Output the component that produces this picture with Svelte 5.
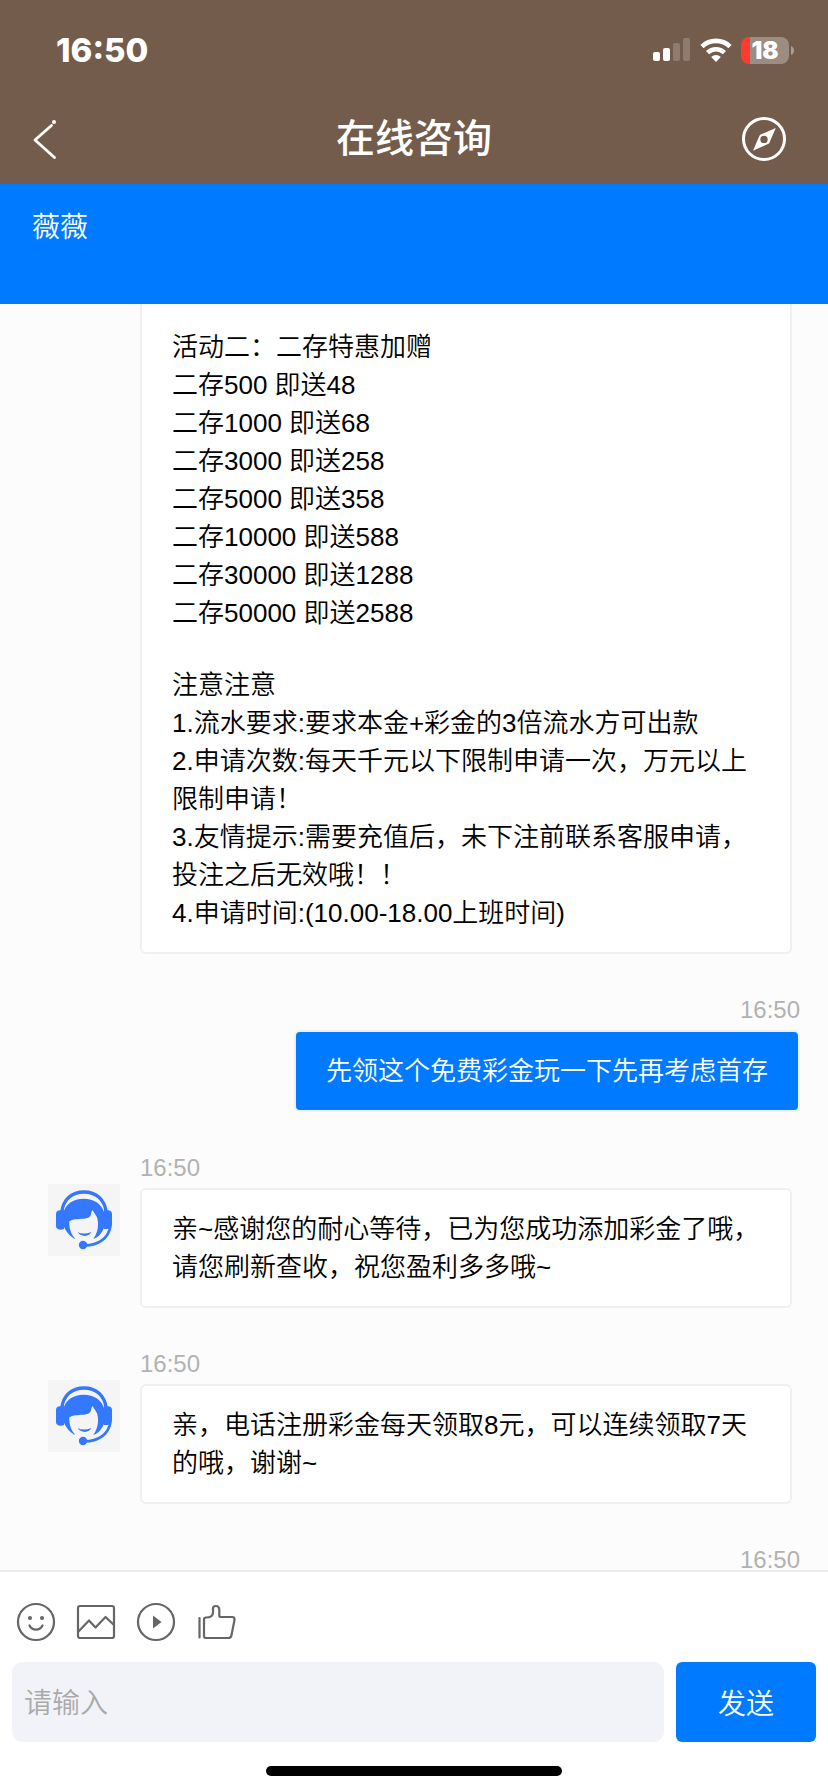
<script lang="ts">
  type Message = { from: 'agent' | 'me', time?: string, lines: string[], continued?: boolean };

  let draft = $state('');

  const messages: Message[] = [
    {
      from: 'agent',
      continued: true,
      lines: [
        '活动二：二存特惠加赠',
        '二存500 即送48',
        '二存1000 即送68',
        '二存3000 即送258',
        '二存5000 即送358',
        '二存10000 即送588',
        '二存30000 即送1288',
        '二存50000 即送2588',
        '',
        '注意注意',
        '1.流水要求:要求本金+彩金的3倍流水方可出款',
        '2.申请次数:每天千元以下限制申请一次，万元以上限制申请！',
        '3.友情提示:需要充值后，未下注前联系客服申请，投注之后无效哦！！',
        '4.申请时间:(10.00-18.00上班时间)'
      ]
    },
    { from: 'me', time: '16:50', lines: ['先领这个免费彩金玩一下先再考虑首存'] },
    { from: 'agent', time: '16:50', lines: ['亲~感谢您的耐心等待，已为您成功添加彩金了哦，请您刷新查收，祝您盈利多多哦~'] },
    { from: 'agent', time: '16:50', lines: ['亲，电话注册彩金每天领取8元，可以连续领取7天的哦，谢谢~'] },
    { from: 'me', time: '16:50', lines: [] }
  ];
</script>

<div class="app">
  <header>
    <div class="status">
      <span class="clock">16:50</span>
      <div class="indicators">
        <svg class="signal" width="37" height="24" viewBox="0 0 37 24" fill="#fff">
          <rect x="0" y="14" width="7" height="9" rx="2"/>
          <rect x="10" y="10" width="7" height="13" rx="2"/>
          <rect x="20" y="5" width="7" height="18" rx="2" opacity=".2"/>
          <rect x="30" y="0" width="7" height="23" rx="2" opacity=".2"/>
        </svg>
        <svg class="wifi" width="32" height="24" viewBox="0 0 32 24" fill="none" stroke="#fff" stroke-width="4.6">
          <path d="M2 8.6a20 20 0 0 1 28 0"/>
          <path d="M7.6 14.7a12 12 0 0 1 16.8 0"/>
          <path d="M16 24l-4.800-5a7 7 0 0 1 9.600 0z" fill="#fff" stroke="none"/>
        </svg>
        <div class="battery">18</div>
        <svg class="cap" width="3" height="9" viewBox="0 0 3 9"><path d="M0 0q3 1.500 3 4.500t-3 4.500z" fill="#fff" opacity=".4"/></svg>
      </div>
    </div>
    <nav>
      <button class="icon-button" type="button" aria-label="返回">
        <svg width="44" height="44" viewBox="0 0 44 44" fill="none" stroke="#fff" stroke-width="2.8" stroke-linecap="round" stroke-linejoin="round">
          <path d="M29.500 8.500L13 23l19.500 17.500"/>
          <circle cx="32" cy="5" r="2" fill="#fff" stroke="none"/>
        </svg>
      </button>
      <h1>在线咨询</h1>
      <button class="icon-button" type="button" aria-label="浏览">
        <svg width="44" height="44" viewBox="0 0 44 44">
          <circle cx="22" cy="22" r="20.500" fill="none" stroke="#fff" stroke-width="3"/>
          <path fill="#fff" fill-rule="evenodd" d="M33.800 11L27.500 25.500Q27 26.500 26 27L11 33.700 17.300 19q.4-1 1.400-1.500zM22 18.700a3.700 3.700 0 1 0 0 7.400 3.700 3.700 0 0 0 0-7.400z"/>
        </svg>
      </button>
    </nav>
  </header>

  <div class="agent-bar">薇薇</div>

  <main>
    {#each messages as m}
      <div class="message {m.from}" class:continued={m.continued}>
        {#if m.time}
          <time>{m.time}</time>
        {/if}
        {#if m.lines.length}
          <div class="bubble">
            {#each m.lines as line}
              <p class:blank={!line}>{line}</p>
            {/each}
          </div>
        {/if}
        {#if m.from === 'agent' && !m.continued}
          <svg class="avatar" viewBox="0 0 216 216" fill="#3478ff">
            <rect width="216" height="216" fill="#f5f5f5"/>
            <path d="M41 86C45 46 72 24 108 24s62 22 67 62" fill="none" stroke="#3478ff" stroke-width="10"/>
            <path d="M24 90q0-10 12-11h12v56q-4 2-12 2-12-1-12-11zM168 79h12q12 1 12 11v32q0 11-13 13h-11z"/>
            <path d="M46 88C51 60 76 44 107 44s56 16 62 44v40c-6 18-17 31-33 37 13-18 18-43 11-65-4-8-8-14-14-22-2 3-3 9-5 16-3 7-10 9-20 10-22 1-35 1-44 8-1 22 5 39 18 53-14-6-27-20-34-37z"/>
            <path d="M89 145q19 8 41-1-5 11-20 12-14-1-21-11z"/>
            <path d="M187 128C181 163 151 184 110 184" fill="none" stroke="#3478ff" stroke-width="8"/>
            <circle cx="105" cy="183" r="12.500"/>
          </svg>
        {/if}
      </div>
    {/each}
  </main>

  <footer>
    <div class="tools">
      <button type="button" aria-label="表情">
        <svg viewBox="0 0 40 40">
          <circle cx="20" cy="20" r="18"/>
          <path d="M13.500 23.500c2.500 5.500 10.500 5.500 13 0"/>
          <circle class="solid" cx="14" cy="16" r="2"/>
          <circle class="solid" cx="26" cy="16" r="2"/>
        </svg>
      </button>
      <button type="button" aria-label="图片">
        <svg viewBox="0 0 40 40">
          <rect x="2" y="4" width="36" height="32" rx="2"/>
          <path d="M2 30l11-11.500 6.500 7L29.500 15l8.500 8"/>
        </svg>
      </button>
      <button type="button" aria-label="视频">
        <svg viewBox="0 0 40 40">
          <circle cx="20" cy="20" r="18"/>
          <path class="solid" d="M17 13.500v13l8.500-6.500z"/>
        </svg>
      </button>
      <button type="button" aria-label="点赞">
        <svg viewBox="0 0 40 40">
          <path d="M3.500 16v19.500M8 17.500q0-2 2-2 7 0 7-5V6.500q0-2.500 3-2.500t3.300 3.500v6q0 1.500 1.500 1.500h11.500q2.500 0 2.200 3L35.500 33q-.5 3-3 3H10q-2 0-2-2z"/>
        </svg>
      </button>
    </div>
    <form onsubmit={e => e.preventDefault()}>
      <input bind:value={draft} placeholder="请输入" aria-label="请输入" autocomplete="off"/>
      <button class="send" type="submit">发送</button>
    </form>
    <div class="home"></div>
  </footer>
</div>

<style>
  :global(body) {
    margin: 0;
  }
  * {
    box-sizing: border-box;
  }
  .app {
    background-color: #fcfcfc;
    color: #000;
    display: flex;
    flex-direction: column;
    font-family: "Liberation Sans", "Noto Sans CJK SC", sans-serif;
    font-weight: 350;
    height: 100vh;
    overflow: hidden;
  }
  button, input {
    border: none;
    font-family: inherit;
    font-weight: inherit;
    margin: 0;
    padding: 0;
  }
  button {
    background: none;
    cursor: pointer;
  }
  svg {
    display: block;
  }

  header {
    background-color: #745c4c;
    color: #fff;
    flex: none;
    height: 184px;
  }
  .status {
    align-items: center;
    display: flex;
    font-family: Inter, sans-serif;
    height: 100px;
    justify-content: space-between;
    padding: 0 34px 0 56px;
  }
  .clock {
    font-size: 33px;
    font-weight: 800;
  }
  .indicators {
    align-items: center;
    display: flex;
  }
  .wifi {
    margin: 0 9px 0 10px;
  }
  .battery {
    background: linear-gradient(to right, #ff3b30 9px, #9d8c82 9px);
    border-radius: 8px;
    font-size: 24px;
    font-weight: 900;
    height: 27px;
    line-height: 27px;
    text-align: center;
    width: 48px;
  }
  .cap {
    margin-left: 2px;
  }
  nav {
    align-items: center;
    display: flex;
    height: 78px;
    justify-content: space-between;
    padding: 0 42px 0 22px;
  }
  .icon-button {
    height: 44px;
    width: 44px;
  }
  h1 {
    font-size: 39px;
    font-weight: 500;
    line-height: 56px;
    margin: 0 0 0 20px;
  }

  .agent-bar {
    background-color: #007aff;
    color: #fff;
    flex: none;
    font-size: 28px;
    height: 120px;
    line-height: 40px;
    padding: 24px 32px;
  }

  main {
    display: flex;
    flex: 1;
    flex-direction: column;
    gap: 46px;
    min-height: 0;
    overflow: hidden;
  }
  .message {
    display: flex;
    flex: none;
    flex-direction: column;
    padding: 0 28px 0 140px;
    position: relative;
  }
  .agent {
    align-items: flex-start;
    padding-right: 36px;
  }
  .me {
    align-items: flex-end;
  }
  time {
    color: #b2b2b2;
    font-size: 24px;
    line-height: 20px;
    margin-bottom: 10px;
  }
  .bubble {
    background-color: #fff;
    border: 2px solid #f0f0f0;
    border-radius: 6px;
    font-size: 26px;
    line-height: 38px;
    padding: 20px 30px;
  }
  .agent .bubble {
    width: 100%;
  }
  .me .bubble {
    background-color: #007aff;
    color: #fff;
  }
  .continued .bubble {
    border-top: none;
    border-top-left-radius: 0;
    border-top-right-radius: 0;
    padding-top: 24px;
  }
  p {
    margin: 0;
  }
  .blank {
    height: 34px;
  }
  .avatar {
    height: 72px;
    left: 48px;
    position: absolute;
    top: 26px;
    width: 72px;
  }

  footer {
    background-color: #fff;
    border-top: 2px solid #ebebeb;
    flex: none;
    padding: 30px 12px 16px;
  }
  .tools {
    display: flex;
    gap: 20px;
    padding: 0 4px;
  }
  .tools button {
    height: 40px;
    width: 40px;
  }
  .tools svg {
    fill: none;
    stroke: #666;
    stroke-linecap: round;
    stroke-linejoin: round;
    stroke-width: 2.2;
  }
  .tools .solid {
    fill: #666;
    stroke: none;
  }
  form {
    display: flex;
    gap: 12px;
    margin-top: 20px;
  }
  input {
    background-color: #f2f3f8;
    border-radius: 10px;
    flex: 1;
    font-size: 28px;
    height: 80px;
    min-width: 0;
    outline: none;
    padding: 4px 12px 0;
  }
  input::placeholder {
    color: #aaa;
    opacity: 1;
  }
  .send {
    background-color: #007aff;
    border-radius: 6px;
    color: #fff;
    font-size: 28px;
    height: 80px;
    width: 140px;
  }
  .home {
    background-color: #000;
    border-radius: 5px;
    height: 10px;
    margin: 24px auto 0;
    width: 296px;
  }
</style>
